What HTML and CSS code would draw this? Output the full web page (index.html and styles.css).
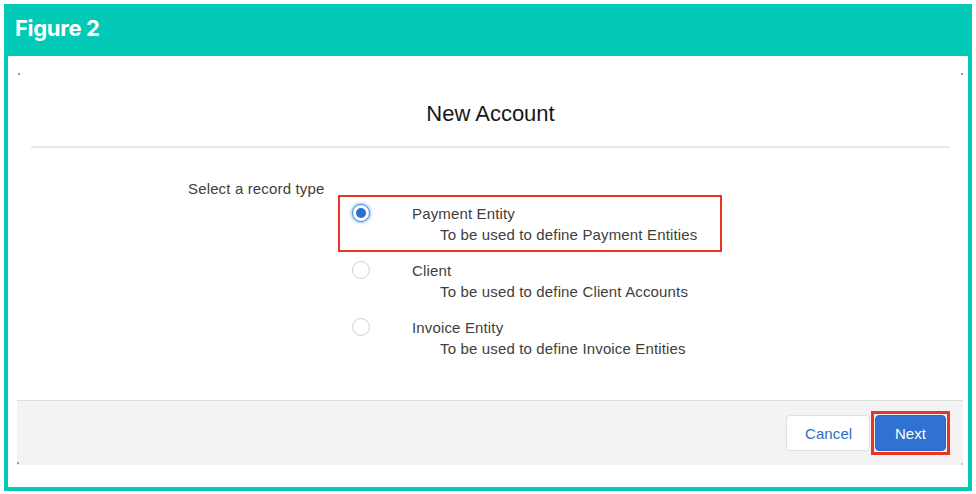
FILE: index.html
```html
<!DOCTYPE html>
<html>
<head>
<meta charset="utf-8">
<link rel="stylesheet" href="styles.css">
</head>
<body>
<div class="frame">
  <div class="fig-header">Figure 2</div>
  <div class="content">
    <div class="modal">
      <span class="corner tl"></span><span class="corner tr"></span>
      <span class="corner bl"></span><span class="corner br"></span>
      <div class="modal-head"><h2 class="modal-title">New Account</h2></div>
      <div class="modal-body">
        <div class="field-label">Select a record type</div>
        <div class="options">
          <div class="option highlight">
            <span class="radio checked"></span>
            <div class="opt-text">
              <div class="opt-label">Payment Entity</div>
              <div class="opt-desc">To be used to define Payment Entities</div>
            </div>
          </div>
          <div class="option">
            <span class="radio"></span>
            <div class="opt-text">
              <div class="opt-label">Client</div>
              <div class="opt-desc">To be used to define Client Accounts</div>
            </div>
          </div>
          <div class="option">
            <span class="radio"></span>
            <div class="opt-text">
              <div class="opt-label">Invoice Entity</div>
              <div class="opt-desc">To be used to define Invoice Entities</div>
            </div>
          </div>
        </div>
      </div>
      <div class="modal-foot">
        <button class="btn btn-neutral">Cancel</button>
        <span class="mark"><button class="btn btn-brand">Next</button></span>
      </div>
    </div>
  </div>
</div>
</body>
</html>
```

FILE: styles.css
```css
html, body {
  margin: 0;
  padding: 0;
  background: #ffffff;
}
body {
  font-family: "Liberation Sans", Arial, sans-serif;
}
.frame {
  margin: 4px;
  width: 968px;
  height: 487px;
  box-sizing: border-box;
  border: 4px solid #02cab7;
  border-top: 0;
  display: flex;
  flex-direction: column;
}
.fig-header {
  background: #02cab7;
  height: 52px;
  box-sizing: border-box;
  padding: 11px 0 0 11px;
  margin: 0 -4px;
  font-family: Inter, "Noto Sans", sans-serif;
  font-weight: 700;
  font-size: 22px;
  line-height: 26px;
  color: #ffffff;
  letter-spacing: -0.3px;
}
.content {
  flex: 1;
  background: #ffffff;
  padding: 17px 5px 0 9px;
}
.modal {
  position: relative;
  height: 392px;
  display: flex;
  flex-direction: column;
}
.corner {
  position: absolute;
  width: 2px;
  height: 2px;
  background: #9a9a9a;
}
.corner.tl { left: 1px; top: 0; }
.corner.tr { right: 0; top: 0; }
.corner.bl { left: 0; bottom: 1px; }
.corner.br { right: 0; bottom: 0; background: #c8c8c8; }
.modal-head {
  margin: 0 13px 0 14px;
  padding: 27px 0 18px;
  border-bottom: 2px solid #e8e8e8;
  text-align: center;
}
.modal-title {
  margin: 0;
  font-size: 22px;
  line-height: 28px;
  font-weight: 400;
  color: #181818;
}
.modal-body {
  flex: 1;
  padding: 30px 0 0 171px;
  color: #3e3e3c;
  font-size: 15px;
  line-height: 21px;
  letter-spacing: 0.15px;
}
.field-label {
  height: 21px;
}
.options {
  margin: -2px 0 0 152px;
  display: flex;
  flex-direction: column;
  gap: 4px;
  width: 380px;
}
.option {
  display: flex;
  align-items: flex-start;
  padding: 6px 13px 5px 12px;
}
.option.highlight {
  outline: 2px solid #ea3323;
}
.radio {
  width: 18px;
  height: 18px;
  box-sizing: border-box;
  border: 1px solid #d2d2d2;
  border-radius: 50%;
  margin-top: 1px;
  flex: none;
  background: #ffffff;
  display: flex;
  align-items: center;
  justify-content: center;
}
.radio.checked {
  border: 1px solid #4a8ae6;
  box-shadow: 0 0 3px 1px rgba(100, 160, 245, 0.7);
}
.radio.checked::after {
  content: "";
  width: 10px;
  height: 10px;
  border-radius: 50%;
  background: #2c6fd0;
}
.opt-text {
  margin-left: 42px;
}
.opt-desc {
  padding-left: 28px;
}
.modal-foot {
  height: 65px;
  box-sizing: border-box;
  background: #f3f3f3;
  border-top: 1px solid #dedede;
  display: flex;
  align-items: center;
  justify-content: flex-end;
  gap: 1px;
  padding: 0 13px 0 0;
}
.btn {
  font-family: "Liberation Sans", Arial, sans-serif;
  font-size: 15px;
  height: 36px;
  border-radius: 4px;
  box-sizing: border-box;
  cursor: pointer;
  letter-spacing: 0.1px;
}
.btn-neutral {
  background: #ffffff;
  border: 1px solid #e0e0e0;
  color: #2e6ec4;
  padding: 0 18px;
  width: 84px;
}
.mark {
  display: flex;
  border: 3px solid #ea3323;
  padding: 1px;
}
.btn-brand {
  background: #2f72d2;
  border: 1px solid #2a68c2;
  color: #ffffff;
  width: 71px;
  padding: 0;
}
```
